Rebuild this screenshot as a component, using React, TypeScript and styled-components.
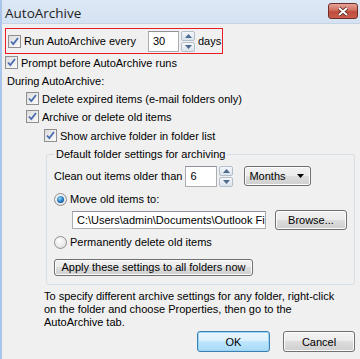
import React from "react"
import styled, { createGlobalStyle } from "styled-components"

const GlobalStyle = createGlobalStyle`
  html, body {
    margin: 0;
    padding: 0;
    background: #f0f0f0;
  }
  body {
    font-family: "Liberation Sans", Arial, sans-serif;
    font-size: 11px;
    color: #000;
  }
`

const Window = styled.div`
  width: 360px;
  height: 359px;
  overflow: hidden;
  box-sizing: border-box;
  border-left: 2px solid #a9c5ea;
  background: #f0f0f0;
  display: flex;
  flex-direction: column;
`

const TitleBar = styled.div`
  height: 23px;
  flex: none;
  display: flex;
  align-items: center;
  justify-content: space-between;
  padding: 0 2px 0 3px;
  background: linear-gradient(#dee8f5, #d5e2f2);
  border-bottom: 1px solid #c7d4e5;
`

const Title = styled.span`
  font-family: "Open Sans", "Liberation Sans", sans-serif;
  font-size: 13.5px;
  color: #1e1e1e;
  margin-top: 2px;
`

const CloseButton = styled.div`
  width: 28px;
  height: 14px;
  margin-top: -1px;
  border: 1px solid #6e2f28;
  border-radius: 3px;
  background: linear-gradient(#e6a396, #d06f5f 45%, #bf4b3b 55%, #c85d4c);
  display: flex;
  align-items: center;
  justify-content: center;
`

const Body = styled.div`
  flex: 1;
  display: flex;
  flex-direction: column;
  padding: 4px 0 0 3px;
`

const Highlight = styled.div`
  width: 218px;
  height: 26px;
  box-sizing: border-box;
  border: 1px solid #ec1c24;
  display: flex;
  align-items: center;
  padding-left: 2px;
  gap: 3px;
`

const Row = styled.div<{ $indent?: number; $h?: number }>`
  display: flex;
  align-items: center;
  gap: 3px;
  height: ${(p) => p.$h ?? 19}px;
  padding-left: ${(p) => p.$indent ?? 0}px;
  flex: none;
`

const Label = styled.span`
  white-space: nowrap;
`

const Box = styled.span`
  width: 13px;
  height: 13px;
  box-sizing: border-box;
  flex: none;
  border: 1px solid #8f8f8f;
  background: linear-gradient(135deg, #dcdcdc, #fbfbfb);
  display: flex;
  align-items: center;
  justify-content: center;
`

const Radio = styled.span<{ $on?: boolean }>`
  width: 13px;
  height: 13px;
  box-sizing: border-box;
  flex: none;
  border-radius: 50%;
  border: 1px solid #8f8f8f;
  background: radial-gradient(circle at 40% 35%, #ffffff, #d8d8d8);
  display: flex;
  align-items: center;
  justify-content: center;
  &::after {
    content: "";
    display: ${(p) => (p.$on ? "block" : "none")};
    width: 7px;
    height: 7px;
    border-radius: 50%;
    background: radial-gradient(circle at 40% 35%, #8fd3f7, #1a6fb8 60%, #0d3e73);
  }
`

const TextInput = styled.div<{ $w: number; $h?: number }>`
  width: ${(p) => p.$w}px;
  height: ${(p) => p.$h ?? 21}px;
  box-sizing: border-box;
  border: 1px solid #abadb3;
  border-top-color: #8e9199;
  background: #fff;
  display: flex;
  align-items: center;
  padding-left: 4px;
  overflow: hidden;
  white-space: nowrap;
  flex: none;
`

const Spin = styled.div`
  width: 14px;
  height: 21px;
  display: flex;
  flex-direction: column;
  gap: 1px;
  margin-left: -1px;
  flex: none;
`

const SpinHalf = styled.div`
  flex: 1;
  box-sizing: border-box;
  border: 1px solid #b4bfcc;
  border-radius: 2px;
  background: linear-gradient(#f4f7fb, #dbe3ec);
  display: flex;
  align-items: center;
  justify-content: center;
`

const Button = styled.div<{ $w: number; $h?: number; $default?: boolean }>`
  width: ${(p) => p.$w}px;
  height: ${(p) => p.$h ?? 21}px;
  box-sizing: border-box;
  flex: none;
  border: 1px solid ${(p) => (p.$default ? "#3c7fb1" : "#707070")};
  border-radius: 3px;
  background: ${(p) =>
    p.$default
      ? "linear-gradient(#eaf6fd, #d9f0fc 50%, #bee6fd 50%, #a7d9f5)"
      : "linear-gradient(#f2f2f2, #ebebeb 50%, #dddddd 50%, #cfcfcf)"};
  box-shadow: inset 0 0 0 1px ${(p) => (p.$default ? "#9cd5f6" : "#fcfcfc")};
  display: flex;
  align-items: center;
  justify-content: center;
  white-space: nowrap;
`

const Select = styled(Button)`
  justify-content: space-between;
  padding: 0 6px 0 4px;
  margin-left: 8px;
`

const Group = styled.fieldset`
  margin: 3px 5px 0 41px;
  padding: 4px 0 0 7px;
  height: 137px;
  box-sizing: border-box;
  border: 1px solid #d5dfe5;
  border-radius: 3px;
  display: flex;
  flex-direction: column;
`

const Legend = styled.legend`
  padding: 0 2px;
  margin-left: 0;
  font-size: 11px;
`

const Note = styled.p`
  margin: 5px 0 0 39px;
  line-height: 13px;
  width: 300px;
`

const Footer = styled.div`
  display: flex;
  justify-content: flex-end;
  gap: 13px;
  padding-right: 5px;
  margin-top: 2px;
`

const Check = () => (
  <Box>
    <svg width="9" height="9" viewBox="0 0 9 9">
      <path d="M1 4.5 L3.3 7 L8 1" fill="none" stroke="#4a6cb0" strokeWidth="1.8" />
    </svg>
  </Box>
)

const Arrow = ({ up }: { up?: boolean }) => (
  <svg width="7" height="4" viewBox="0 0 7 4">
    <path d={up ? "M0 4 L3.5 0 L7 4Z" : "M0 0 L3.5 4 L7 0Z"} fill="#4d6a8f" />
  </svg>
)

const Spinner = ({ value, w }: { value: string; w: number }) => (
  <>
    <TextInput $w={w}>{value}</TextInput>
    <Spin>
      <SpinHalf>
        <Arrow up />
      </SpinHalf>
      <SpinHalf>
        <Arrow />
      </SpinHalf>
    </Spin>
  </>
)

const App: React.FC = () => {
  return (
    <Window>
      <GlobalStyle />
      <TitleBar>
        <Title>AutoArchive</Title>
        <CloseButton>
          <svg width="12" height="9" viewBox="0 0 12 9">
            <path d="M2 1 L10 8 M10 1 L2 8" stroke="#4a1c16" strokeWidth="3.4" />
            <path d="M2 1 L10 8 M10 1 L2 8" stroke="#fff" strokeWidth="2" />
          </svg>
        </CloseButton>
      </TitleBar>
      <Body>
        <Highlight>
          <Check />
          <Label style={{ width: 121 }}>Run AutoArchive every</Label>
          <Spinner value="30" w={31} />
          <Label>days</Label>
        </Highlight>
        <Row $h={17}>
          <Check />
          <Label>Prompt before AutoArchive runs</Label>
        </Row>
        <Row $h={19} $indent={2}>
          <Label>During AutoArchive:</Label>
        </Row>
        <Row $indent={21} $h={17}>
          <Check />
          <Label>Delete expired items (e-mail folders only)</Label>
        </Row>
        <Row $indent={21}>
          <Check />
          <Label>Archive or delete old items</Label>
        </Row>
        <Row $indent={39}>
          <Check />
          <Label>Show archive folder in folder list</Label>
        </Row>
        <Group>
          <Legend>Default folder settings for archiving</Legend>
          <Row $h={24}>
            <Label>Clean out items older than</Label>
            <Spinner value="6" w={32} />
            <Select $w={67} $h={20}>
              Months
              <svg width="7" height="4" viewBox="0 0 7 4">
                <path d="M0 0 L3.5 4 L7 0Z" fill="#000" />
              </svg>
            </Select>
          </Row>
          <Row $h={22}>
            <Radio $on />
            <Label>Move old items to:</Label>
          </Row>
          <Row $h={20} $indent={18} style={{ gap: 9 }}>
            <TextInput $w={194} $h={18}>
              C:\Users\admin\Documents\Outlook Fil
            </TextInput>
            <Button $w={72} $h={20}>
              Browse...
            </Button>
          </Row>
          <Row $h={24}>
            <Radio />
            <Label>Permanently delete old items</Label>
          </Row>
          <Row $h={26}>
            <Button $w={199} $h={17}>
              Apply these settings to all folders now
            </Button>
          </Row>
        </Group>
        <Note>
          To specify different archive settings for any folder, right-click on the folder and
          choose Properties, then go to the AutoArchive tab.
        </Note>
        <Footer>
          <Button $w={73} $default>
            OK
          </Button>
          <Button $w={72}>Cancel</Button>
        </Footer>
      </Body>
    </Window>
  )
}

export default App
